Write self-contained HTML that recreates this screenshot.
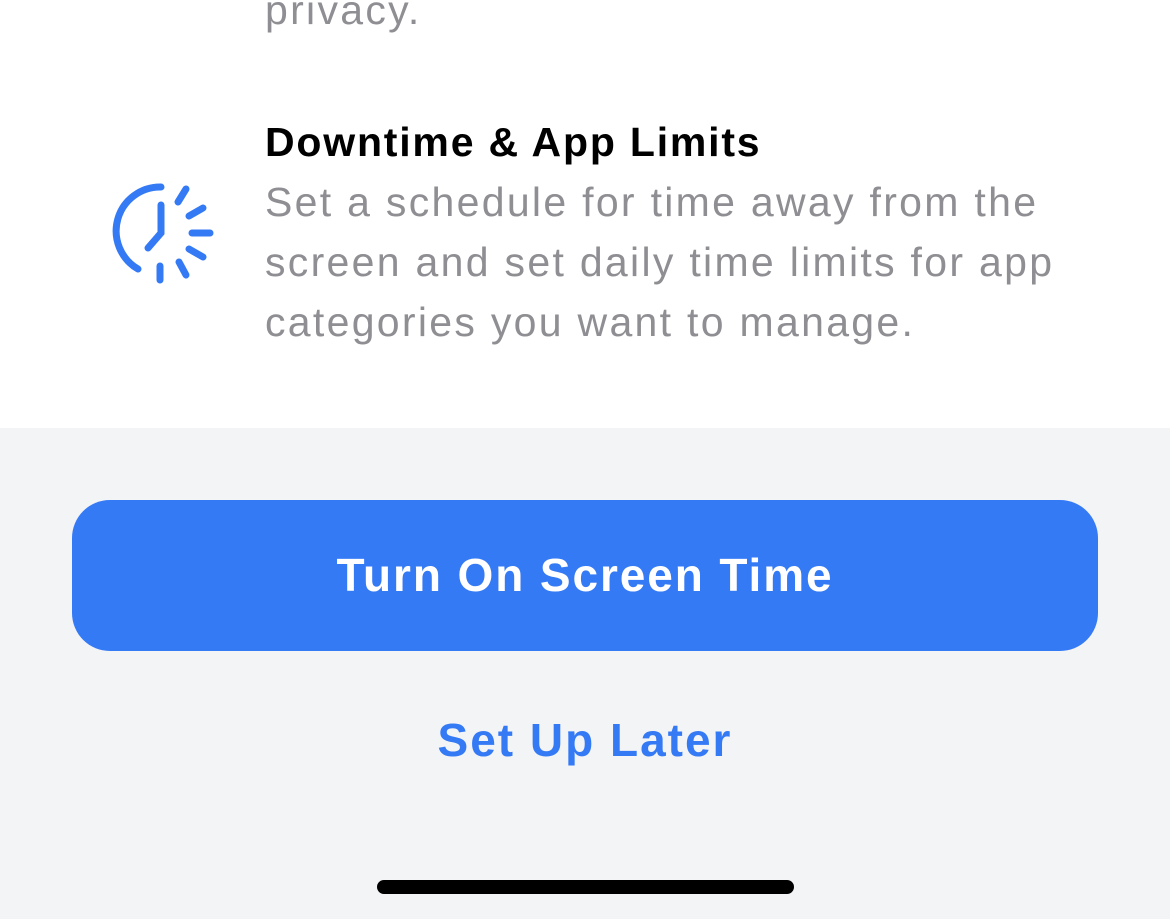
<!DOCTYPE html>
<html><head><style>
body{margin:0;width:1170px;height:919px;overflow:hidden;background:#fff;font-family:"Liberation Sans",sans-serif;position:relative}
.t{position:absolute;left:265px;white-space:nowrap}
.g{color:#8e8e93;font-size:41px;letter-spacing:2.3px}
.bot{position:absolute;left:0;top:428px;width:1170px;height:491px;background:#f3f4f6}
.btn{position:absolute;left:72px;top:500px;width:1026px;height:151px;border-radius:38px;background:#357af5;color:#fff;font-size:46px;font-weight:bold;text-align:center;line-height:151px;letter-spacing:1.9px}
.later{position:absolute;left:0;width:1170px;top:713px;text-align:center;color:#357af5;font-size:46px;font-weight:bold;letter-spacing:2px}
.home{position:absolute;left:377px;top:880px;width:417px;height:14px;border-radius:7px;background:#000}
</style></head><body>
<div class="t g" style="top:-13px">privacy.</div>
<div class="t" style="top:119px;font-size:41px;font-weight:bold;color:#000;letter-spacing:1.8px">Downtime &amp; App Limits</div>
<div class="t g" style="top:179px">Set a schedule for time away from the</div>
<div class="t g" style="top:239px">screen and set daily time limits for app</div>
<div class="t g" style="top:299px">categories you want to manage.</div>
<svg style="position:absolute;left:100px;top:170px" width="130" height="120" viewBox="100 170 130 120">
<g fill="none" stroke="#357af5" stroke-width="7" stroke-linecap="round">
<path d="M161 187 A44 44 0 0 0 138 269"/>
<path d="M161 205 V233 L148 248"/>
<path d="M178 202 L186 189"/>
<path d="M189 216 L203 208"/>
<path d="M192 233 L210 233"/>
<path d="M189 249 L203 257"/>
<path d="M179 262 L186 275"/>
<path d="M160 266 V280"/>
</g></svg>
<div class="bot"></div>
<div class="btn">Turn On Screen Time</div>
<div class="later">Set Up Later</div>
<div class="home"></div>
</body></html>
